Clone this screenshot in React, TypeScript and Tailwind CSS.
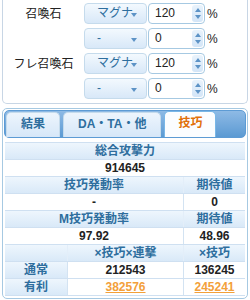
import type { ReactNode } from "react";

const FONT = { fontFamily: '"Liberation Sans", "Noto Sans CJK JP", sans-serif' };

function Select({ value }: { value: string }) {
  return (
    <div className="relative h-[21px] w-[63px] rounded-[4px] border border-[#c5dbec] bg-linear-to-b from-[#f3f9fe] to-[#d8e8f8] pl-[12px] text-[12px] leading-[19px] text-[#2e6e9e]">
      {value}
      <span className="absolute right-[9px] top-[9px] h-0 w-0 border-x-[3px] border-t-[4px] border-x-transparent border-t-[#5d93c6]" />
    </div>
  );
}

function Spinner({ value }: { value: string }) {
  return (
    <div className="ml-[1px] flex h-[21px] w-[57px] items-stretch rounded-[4px] border border-[#a6c9e2] bg-white">
      <div className="flex-1 pl-[6px] text-[12px] leading-[19px] text-[#222]">{value}</div>
      <div className="my-[1px] mr-[1px] flex w-[11px] flex-col items-center justify-center gap-[3px] rounded-[3px] bg-linear-to-b from-[#e9f3fc] to-[#d3e5f7]">
        <span className="h-0 w-0 border-x-[3px] border-b-[4px] border-x-transparent border-b-[#5d93c6]" />
        <span className="h-0 w-0 border-x-[3px] border-t-[4px] border-x-transparent border-t-[#5d93c6]" />
      </div>
    </div>
  );
}

function StoneRow({ label, kind, pct }: { label: string; kind: string; pct: string }) {
  return (
    <div className="flex items-center">
      <div className="w-[81px] text-center text-[12px] text-[#222]">{label}</div>
      <Select value={kind} />
      <Spinner value={pct} />
      <span className="ml-[2px] text-[12px] text-[#222]">%</span>
    </div>
  );
}

const HEAD = "bg-linear-to-b from-[#eef6fd] to-[#d9e9f8] text-[#2e6e9e] border-[#e3eef9]";
const BODY = "bg-white text-[#222] border-[#d3e3f2]";

function Cell({
  children,
  w,
  head,
  link,
  first,
}: {
  children?: ReactNode;
  w: string;
  head?: boolean;
  link?: boolean;
  first?: boolean;
}) {
  return (
    <div
      className={`${w} ${head ? HEAD : BODY} ${first ? "" : "border-l"} h-[16px] text-center text-[12px] font-bold leading-[16px]`}
    >
      {link ? <span className="text-[#f3a03a] underline">{children}</span> : children}
    </div>
  );
}

function Row({ children }: { children: ReactNode }) {
  return <div className="flex border-b border-[#cfe0f1]">{children}</div>;
}

export default function App() {
  return (
    <div className="h-[300px] w-[250px] overflow-hidden bg-white" style={FONT}>
      {/* summon stones */}
      <div className="ml-[2px] flex w-[246px] flex-col gap-[4px] rounded-b-[5px] border border-t-0 border-[#c8d6e5] pb-[4px] pt-[3px]">
        <StoneRow label="召喚石" kind="マグナ" pct="120" />
        <StoneRow label="" kind="-" pct="0" />
        <StoneRow label="フレ召喚石" kind="マグナ" pct="120" />
        <StoneRow label="" kind="-" pct="0" />
      </div>

      {/* result tabs */}
      <div className="ml-[2px] mt-[4px] w-[246px] rounded-[5px] border border-[#a6c9e2] p-[1px] pb-[2px]">
        <div className="flex h-[28px] items-end gap-[3px] rounded-[5px] border border-[#5d9bd4] bg-linear-to-b from-[#8ebae5] to-[#5b9ad3] pl-[1px]">
          <div className="h-[25px] rounded-t-[5px] border border-b-0 border-[#c5dbec] bg-linear-to-b from-[#edf5fd] to-[#d6e7f8] px-[14px] text-[12px] font-bold leading-[22px] text-[#2e6e9e]">
            結果
          </div>
          <div className="h-[25px] rounded-t-[5px] border border-b-0 border-[#c5dbec] bg-linear-to-b from-[#edf5fd] to-[#d6e7f8] px-[14px] text-[12px] font-bold leading-[22px] text-[#2e6e9e]">
            DA・TA・他
          </div>
          <div className="h-[26px] rounded-t-[5px] border border-b-0 border-[#79b7e7] bg-[#fbfdff] px-[13px] text-[12px] font-bold leading-[22px] text-[#e17009]">
            技巧
          </div>
        </div>

        <div className="mx-[1px] mt-[4px] w-[240px] border-t border-[#cfe0f1]">
          <Row><Cell first head w="w-[240px]">総合攻撃力</Cell></Row>
          <Row><Cell first w="w-[240px]">914645</Cell></Row>
          <Row><Cell first head w="w-[178px]">技巧発動率</Cell><Cell head w="w-[62px]">期待値</Cell></Row>
          <Row><Cell first w="w-[178px]">-</Cell><Cell w="w-[62px]">0</Cell></Row>
          <Row><Cell first head w="w-[178px]">M技巧発動率</Cell><Cell head w="w-[62px]">期待値</Cell></Row>
          <Row><Cell first w="w-[178px]">97.92</Cell><Cell w="w-[62px]">48.96</Cell></Row>
          <Row><Cell first head w="w-[62px]" /><Cell head w="w-[116px]">×技巧×連撃</Cell><Cell head w="w-[62px]">×技巧</Cell></Row>
          <Row><Cell first head w="w-[62px]">通常</Cell><Cell w="w-[116px]">212543</Cell><Cell w="w-[62px]">136245</Cell></Row>
          <Row><Cell first head w="w-[62px]">有利</Cell><Cell link w="w-[116px]">382576</Cell><Cell link w="w-[62px]">245241</Cell></Row>
        </div>
      </div>
    </div>
  );
}
